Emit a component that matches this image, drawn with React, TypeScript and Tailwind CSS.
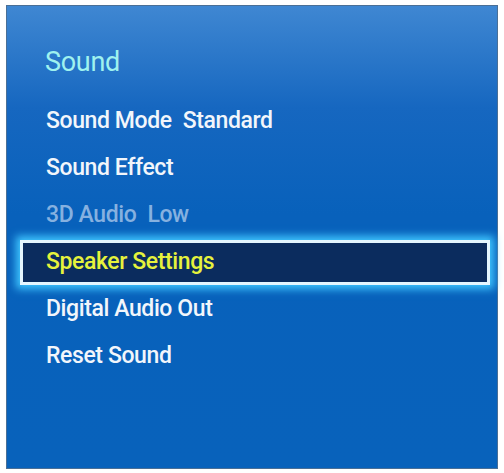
const items = [
    { label: 'Sound Mode', value: 'Standard' },
    { label: 'Sound Effect' },
    { label: '3D Audio', value: 'Low', disabled: true },
    { label: 'Speaker Settings', selected: true },
    { label: 'Digital Audio Out' },
    { label: 'Reset Sound' },
];

function MenuRow({ label, value, disabled, selected }: { label: string; value?: string; disabled?: boolean; selected?: boolean }) {
    if (selected) {
        return (
            <div className="h-[47px] flex items-center pl-[13px] pr-[7px]">
                <div className="w-full h-[45px] border-[3px] border-[#e4f6ff] bg-[#0b2c5e] shadow-[0_0_8px_4px_#3fc6ff] flex items-center pl-[23px]">
                    <span className="text-[#e6f23c] text-[23px] font-medium tracking-[-0.4px]">{label}</span>
                </div>
            </div>
        );
    }
    return (
        <div className="h-[47px] flex items-center pl-[39px]">
            <span className={`text-[23px] font-medium tracking-[-0.4px] ${disabled ? 'text-[#86b1e0]' : 'text-[#f2f6fb]'}`}>
                {label}
                {value && <span className="ml-[11px]">{value}</span>}
            </span>
        </div>
    );
}

function App() {
    return (
        <div className="w-[504px] h-[473px] bg-white pt-[5px] pl-[6px] font-['Roboto','Liberation_Sans',Arial,sans-serif]">
            <div className="w-[492px] h-[464px] border border-[#4a6f96] bg-[linear-gradient(180deg,#3f87d2_0%,#1667c0_22%,#0861bb_45%,#0862bb_100%)] flex flex-col">
                <div className="h-[92px] flex items-center pl-[38px] pt-[20px]">
                    <span className="text-[#9ff2ef] text-[27px] tracking-[-0.3px]">Sound</span>
                </div>
                <div className="flex flex-col">
                    {items.map((item) => (
                        <MenuRow key={item.label} {...item} />
                    ))}
                </div>
            </div>
        </div>
    );
}

export default App;
